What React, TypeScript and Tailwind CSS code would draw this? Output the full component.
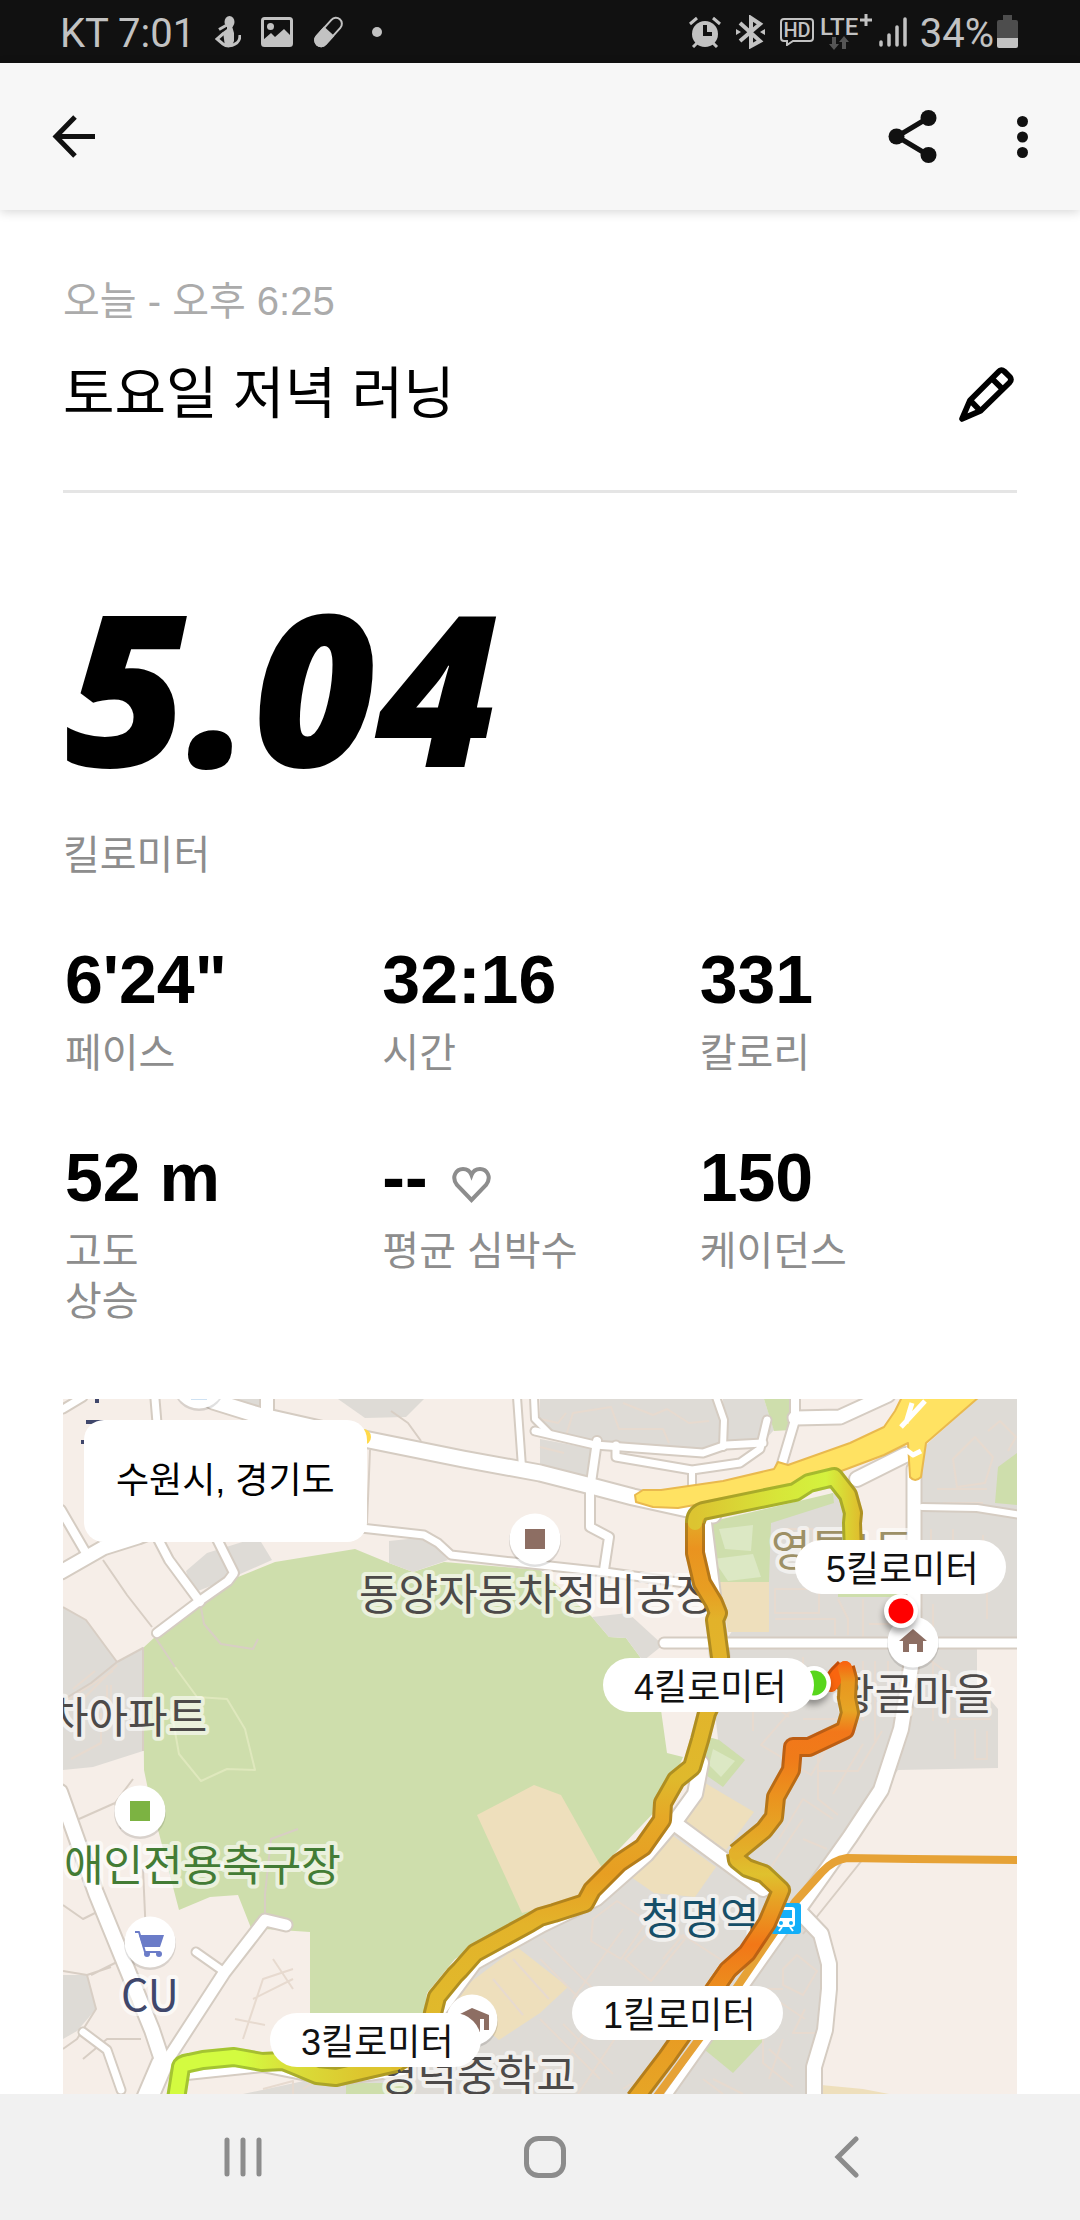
import type { ReactNode } from "react";

const stats = [
  { value: "6'24\"", label: "페이스" },
  { value: "32:16", label: "시간" },
  { value: "331", label: "칼로리" },
  { value: "52 m", label: "고도\n상승" },
  { value: "--", label: "평균 심박수", heart: true },
  { value: "150", label: "케이던스" },
];

const areas = [
  // built-up blocks
  { fill: "#dedbd6", points: "0,208 23,221 54,263 80,249 80,352 30,368 0,371" },
  { fill: "#dedbd6", points: "123,172 144,154 195,138 209,161 175,176 130,194" },
  { fill: "#dedbd6", points: "275,0 361,0 343,18 302,19" },
  { fill: "#dedbd6", points: "205,0 150,0 170,6 200,14" },
  { fill: "#dedbd6", points: "477,0 653,0 661,46 640,54 532,44 477,34" },
  { fill: "#dedbd6", points: "660,0 701,0 711,31 701,42 661,42" },
  { fill: "#dedbd6", points: "477,40 530,50 526,78 477,66" },
  { fill: "#dedbd6", points: "863,46 914,0 954,0 954,240 856,240 856,90" },
  { fill: "#dedbd6", points: "706,118 770,94 784,100 842,122 842,238 665,238 706,180" },
  { fill: "#dedbd6", points: "645,250 914,250 914,285 935,310 935,369 835,371 740,511 760,545 760,640 748,695 180,695 250,680 330,650 400,580 520,510 600,430 655,340" },
  { fill: "#dedbd6", points: "0,576 24,576 33,610 14,632 0,640" },
  { fill: "#f6eee8", points: "786,100 850,60 845,160 788,160" },
  // parks and hills
  { fill: "#cedeac", points: "80,249 92,238 175,178 212,163 292,150 326,164 350,173 381,163 477,171 529,218 546,238 563,239 577,258 598,311 604,354 620,358 600,404 539,468 477,508 392,560 364,594 361,614 247,614 247,533 188,529 175,496 147,498 116,511 87,400 81,371" },
  { fill: "#cedeac", points: "701,0 728,0 728,31 711,32" },
  { fill: "#cedeac", points: "642,124 770,94 771,104 708,124 706,183 649,183" },
  { fill: "#cedeac", points: "775,193 842,193 842,198 775,198" },
  { fill: "#cedeac", points: "935,68 954,54 954,106 932,104" },
  { fill: "#cedeac", points: "646,338 656,341 682,361 660,388 640,374" },
  { fill: "#cedeac", points: "642,651 670,674 701,641 690,600 660,600" },
  { fill: "#cedeac", points: "283,684 350,684 350,695 283,695" },
  { fill: "#dce8c4", points: "656,130 690,126 688,152 662,150" },
  { fill: "#dce8c4", points: "650,160 690,155 698,178 665,182" },
  { fill: "#dce8c4", points: "650,350 672,362 658,378 646,366" },
  // school grounds
  { fill: "#dedbd6", points: "326,142 364,138 385,161 350,173 326,164" },
  { fill: "#dedbd6", points: "529,218 565,214 600,246 580,262 563,239 546,238" },
  { fill: "#eedfbc", points: "414,416 471,386 498,396 539,469 511,501 459,514" },
  { fill: "#eedfbc", points: "656,183 706,183 706,233 665,233" },
  { fill: "#eedfbc", points: "642,384 691,413 663,451 622,423" },
  { fill: "#eedfbc", points: "606,434 653,468 632,498 591,494 568,478" },
  { fill: "#eedfbc", points: "385,600 454,548 505,588 477,614 436,641" },
  { fill: "#eedfbc", points: "758,686 800,690 826,695 758,695" },
];

const outlines = [
  "M502 40 510 14 548 8 556 30 600 30 606 44M560 4l30 12 14-6 22 14 20-2M477 20l18 4 8-10",
  "M477 48l24 6M890 60l22-22 18 20-8 26-28 4zM925 32l12-10 16 16-8 14M874 90h50M880 104h40M868 130v60M890 130v30h30v-24M884 190h40v30M870 205v24",
  "M712 190h44v24h-44zM712 220h60v16M770 130v50M720 130h30v20M775 200l10 20v16M800 200v38M806 225h32",
  "M665 262h60v20M690 262v70M740 320h40M740 270v-12M800 262v60M812 262v80M825 262v50M870 262v60M888 320h40M892 330v30M912 330v30h12v-28",
  "M738 300l-40 46 50 30 30-50M755 350v50l20 16M755 372h40l24-40M770 420l-30-20-24 40M800 345l-30 50M740 440l24 10M700 480l40-60",
  "M530 520l24-18 30 20-26 38-30-18zM562 560l34-38 26 18-34 42zM600 560l20-24 40 26M480 540l60 60M510 600l50-70M477 560l80 80M540 640l30-50",
  "M720 570l14-14 20 16-14 24-20-10zM712 600l30 20M720 590h-16l-16 40M742 610l-12 24h30M706 650l22 20M700 640v24l30 24M720 640l-14 40M650 680l30 15",
  "M477 620l60 60M490 680l40-60M515 695l40-60M500 625l50 50M530 610l30 24M470 660l40 30",
  "M180 640l20-60 30-10M190 600l40-20M210 560l20 30M172 620l30 6",
  "M10 290l22-18M0 304l50-32M20 300l34-34M44 300v-14M48 286v26M8 360l30-16v-30",
  "M640 680l20 15M560 690l16-10M200 690l30-8v13M240 690l20-14",
  "M450 560l36 40M430 580l30 36M865 260l20 14v50M700 262l-14 26 40 30",
];

const minorRoads = [
  "M40 161 64 196 89 228",
  "M0 208 23 221 54 263",
  "M54 263 28 284 0 301",
  "M54 263 80 249 80 352",
  "M16 420 52 404M58 430 52 404 70 380",
  "M84 560 80 470",
  "M0 506 20 520 36 512M28 576 60 560M0 572 24 576 48 568",
  "M24 576 33 610 14 640 0 650M78 640 44 640 20 660",
  "M307 51 304 124M328 12 345 24 358 42",
  "M137 203 141 225 158 245 190 250 195 240",
  "M92 238 112 268",
  "M202 521V495L208 440 235 430",
  "M740 535 800 460M858 80V240",
];

const roads = [
  { w: 15, d: "M150 2 195 16 306 41 400 60 477 74 532 88 570 98 629 111 650 116" },
  { w: 12, d: "M204-4V18" },
  { w: 7, d: "M92 0 94 24M0 10 20-2" },
  { w: 13, d: "M-2 173 40 149 75 138 120 120" },
  { w: 8, d: "M-2 111 23 154" },
  { w: 8, d: "M94 138 106 161 137 203" },
  { w: 8, d: "M153 138 171 174 165 182 135 203 94 234" },
  { w: 7, d: "M298 129 361 136 375 144 388 156 450 163 542 173 622 184" },
  { w: 6, d: "M454-2 459 68M471-2 472 20 486 34" },
  { w: 6, d: "M653-2 661 21 660 48" },
  { w: 7, d: "M472 32 532 46 640 54 663 46 700 44" },
  { w: 8, d: "M534 42 527 91 527 128 546 138 541 171" },
  { w: 7, d: "M553 46 553 58 629 71 677 64 697 50 704 21" },
  { w: 6, d: "M629 71V94" },
  { w: 8, d: "M732-2V21L718 68" },
  { w: 13, d: "M732 19 777 18 825-4" },
  { w: 13, d: "M851 70V224" },
  { w: 14, d: "M849 262 838 330 818 391 787 438 735 511" },
  { w: 14, d: "M735 511 758 535 766 565V590L762 631 751 668V700" },
  { w: 9, d: "M601 244H954" },
  { w: 6, d: "M859 108 914 109 958 116" },
  { w: 14, d: "M794 80 842 56" },
  { w: 12, d: "M642 124 652 204 660 260" },
  { w: 14, d: "M638 364 632 395 611 424 700 490" },
  { w: 12, d: "M611 424 584 456 534 500 480 526 412 564 378 610" },
  { w: 14, d: "M-3 393 33 494 89 631 99 661" },
  { w: 11, d: "M96 674 161 574 202 521 223 526" },
  { w: 7, d: "M133 553 160 572" },
  { w: 7, d: "M20 633 44 651 58 691" },
  { w: 20, d: "M99 665 84 700" },
  { w: 8, d: "M124 676 200 668 270 682 340 672" },
  { w: 7, d: "M740 505 670 604 602 700" },
];

const rail = "M956 461 850 460 784 459Q770 461 759 473L732 503 670 594 592 700";

const highway =
  "M572 96 580 91 598 91 660 82 711 70 715 63 725 66 787 44 821 28 832 12 839-2 916-2 863 44 858 78Q852 84 847 78L845 44 821 56 773 74 697 94 615 109 590 108 573 103Z";

const route = [
  { stroke: "url(#south)", d: "M113 700 118 668Q119 665 126 664L140 661 171 658 199 663 220 662 230 666 254 676 273 678 333 664" },
  { stroke: "url(#hill)", d: "M333 664 364 645 370 614 374 598 392 576 397 571 412 554 467 524 477 518 491 514 522 504 529 491 540 480 556 464 580 448 599 421 600 404 613 381 629 368 637 341 644 314 658 284" },
  { stroke: "url(#west)", d: "M658 284 657 258 652 221 655 214 651 204 639 184 632 154 632 124 635 116" },
  { stroke: "url(#north)", d: "M632 124Q632 115 640 112L732 93 746 84 771 78 785 96 790 114 789 124 790 155" },
  { stroke: "#f9650f", d: "M768 286 775 276 782 269" },
  { stroke: "url(#finish)", d: "M665 571 649 594 604 658 572 700" },
  { stroke: "url(#station)", d: "M673 454 674 461 684 469 701 475 718 491 704 524 684 554 665 571 649 594" },
  { stroke: "url(#village)", d: "M782 269 785 280 784 299 787 314 782 331 746 348 730 348 728 371 713 398 711 418 701 431 673 454" },
];

const placeLabels = [
  { x: 296, y: 211, text: "동양자동차정비공장", fill: "#4d4a49" },
  { x: -14, y: 334, text: "차아파트", fill: "#4d4a49" },
  { x: 1, y: 482, text: "애인전용축구장", fill: "#437c35" },
  { x: 58, y: 612, text: "CU", fill: "#40476b" },
  { x: 578, y: 535, text: "청명역", fill: "#174f68" },
  { x: 315, y: 692, text: "영덕중학교", fill: "#4d4a49" },
  { x: 708, y: 167, text: "영통1동", fill: "#9d9066" },
  { x: 772, y: 311, text: "황골마을", fill: "#4d4a49" },
];

const kilometers = [
  { x: 732, y: 141, text: "5킬로미터" },
  { x: 540, y: 259, text: "4킬로미터" },
  { x: 207, y: 614, text: "3킬로미터" },
  { x: 509, y: 587, text: "1킬로미터" },
];

function StatusBar() {
  return (
    <div className="flex h-[63px] items-center justify-between bg-[#111] pr-[62px] pl-[60px] font-[Roboto,sans-serif] text-[40px] leading-[40px] text-[#c2c2c2]">
      <div className="flex items-center gap-5">
        <span className="pt-1">KT 7:01</span>
        <svg className="h-8 w-[26px]" viewBox="0 0 26 32" fill="none" stroke="currentColor">
          <ellipse cx="14.5" cy="6" rx="5" ry="6" fill="currentColor" stroke="none" />
          <path d="M11 9.500 4 13.500" strokeWidth="3" />
          <path d="M12 10h5l2 7v8l-2 5-7 1-1-8-1-7 4-3z" fill="currentColor" stroke="none" />
          <path d="M9 17 2 23l6 5c4 3 9 2 12 0 3-1 5-5 5-9" strokeWidth="3" />
        </svg>
        <svg className="h-8 w-8" viewBox="0 0 32 32">
          <rect x="1.500" y="2.500" width="29" height="27" rx="2" fill="none" stroke="currentColor" strokeWidth="3" />
          <circle cx="9.500" cy="10.500" r="3.500" fill="currentColor" />
          <path d="M2 24 10 17l4 4 9-8 8 8v9H2z" fill="currentColor" />
        </svg>
        <svg className="h-8 w-[31px]" viewBox="0 0 31 32">
          <g transform="rotate(42 15.500 16)">
            <rect x="9.500" y="-1" width="12" height="34" rx="6" fill="none" stroke="currentColor" strokeWidth="2" />
            <path d="M8.500 15h14v12a7 7 0 0 1-14 0z" fill="currentColor" />
          </g>
        </svg>
        <span className="ml-2 size-2.5 rounded-full bg-[#c2c2c2]" />
      </div>

      <div className="flex items-center gap-[7px]">
        <svg className="mr-2 size-8" viewBox="0 0 32 32" fill="none" stroke="currentColor" strokeWidth="3">
          <circle cx="16" cy="18" r="13" fill="currentColor" stroke="none" />
          <path d="M1 8 8 2M31 8l-7-6M4 31l4-4M28 31l-4-4" />
          <path d="M16 9v9h7" stroke="#111" strokeWidth="4" />
        </svg>
        <svg className="mr-2 h-[34px] w-[29px]" viewBox="0 0 29 34" fill="none" stroke="currentColor" strokeWidth="4">
          <path d="M4 8 24 26 15 31V3l9 6L4 26" />
          <path d="M0 14l5 3-5 3zM29 14l-5 3 5 3z" fill="currentColor" stroke="none" />
        </svg>
        <svg className="h-7 w-[34px]" viewBox="0 0 34 28">
          <path d="M4 1h26q3 0 3 3v16q0 3-3 3H13l-6 4v-4H4q-3 0-3-3V4q0-3 3-3z" fill="none" stroke="currentColor" strokeWidth="2" />
          <text x="17" y="19" textAnchor="middle" fill="currentColor" className="text-[20px] font-medium">
            HD
          </text>
        </svg>
        <svg className="h-9 w-[51px]" viewBox="0 0 51 36">
          <text x="-1" y="21" fill="currentColor" className="text-[24px] font-medium">
            LTE
          </text>
          <path d="M39 6h12M45 0v12" stroke="currentColor" strokeWidth="3" />
          <path d="M11 23h4v7h3l-5 6-5-6h3zM21 35h4v-7h3l-5-6-5 6h3z" fill="#555" />
        </svg>
        <svg className="h-[30px] w-7" viewBox="0 0 28 30" stroke="currentColor" strokeWidth="3.500" strokeLinecap="round">
          <path d="M2 25v3M10 18v10M18 10v18M26 2v26" />
        </svg>
        <span className="-mr-1 ml-1.5 pt-1">34%</span>
        <svg className="h-[33px] w-[21px]" viewBox="0 0 21 33">
          <path d="M6 0h9v5h4q2 0 2 2v16H0V7q0-2 2-2h4z" fill="#4d4d4d" />
          <path d="M0 23h21v8q0 2-2 2H2q-2 0-2-2z" fill="currentColor" />
        </svg>
      </div>
    </div>
  );
}

function AppBar() {
  return (
    <header className="z-10 flex h-[147px] items-center justify-between bg-[#f7f7f7] px-[52px] text-[#111] shadow-[0_2px_10px_rgba(0,0,0,0.16)]">
      <button type="button" aria-label="뒤로">
        <svg className="size-[43px]" viewBox="0 0 43 43" fill="none" stroke="currentColor" strokeWidth="5">
          <path d="M43 21.500H4M23 2 4 21.500 23 41" />
        </svg>
      </button>
      <div className="flex items-center gap-20">
        <button type="button" aria-label="공유">
          <svg className="h-[53px] w-[49px]" viewBox="0 0 49 53" fill="currentColor">
            <path d="M40 8 9 26.500 40 45" fill="none" stroke="currentColor" strokeWidth="5" />
            <circle cx="40.500" cy="8" r="8" />
            <circle cx="8.500" cy="26.500" r="8" />
            <circle cx="40.500" cy="45" r="8" />
          </svg>
        </button>
        <button type="button" aria-label="더보기">
          <svg className="h-[42px] w-[11px]" viewBox="0 0 11 42" fill="currentColor">
            <circle cx="5.500" cy="5.500" r="5.500" />
            <circle cx="5.500" cy="21" r="5.500" />
            <circle cx="5.500" cy="36.500" r="5.500" />
          </svg>
        </button>
      </div>
    </header>
  );
}

function Poi({ x, y, children }: { x: number; y: number; children: ReactNode }) {
  return (
    <g transform={`translate(${x} ${y})`}>
      <circle cy="2" r="26" fill="#000" opacity="0.12" />
      <circle r="25.500" fill="#fff" />
      {children}
    </g>
  );
}

function Marker({ x, y, color }: { x: number; y: number; color: string }) {
  return (
    <g transform={`translate(${x} ${y})`}>
      <circle cx="-1" cy="5" r="17" fill="#000" opacity="0.35" filter="url(#soft)" />
      <circle r="17" fill="#fff" />
      <circle r="12.500" fill={color} />
    </g>
  );
}

function RouteMap() {
  return (
    <div className="relative">
      <svg className="block w-full" viewBox="0 0 954 695" fill="none" strokeLinejoin="round">
        <defs>
          <filter id="soft" x="-50%" y="-50%" width="200%" height="200%">
            <feGaussianBlur stdDeviation="3" />
          </filter>
          <linearGradient id="south" gradientUnits="userSpaceOnUse" x1="180" y1="0" x2="300" y2="0">
            <stop offset="0" stopColor="#d3fb40" />
            <stop offset="0.350" stopColor="#d9e13a" />
            <stop offset="1" stopColor="#ddc52e" />
          </linearGradient>
          <linearGradient id="hill" gradientUnits="userSpaceOnUse" x1="0" y1="664" x2="0" y2="300">
            <stop offset="0" stopColor="#dfbd2c" />
            <stop offset="0.380" stopColor="#e3b32a" />
            <stop offset="0.520" stopColor="#e79e22" />
            <stop offset="0.680" stopColor="#e5a927" />
            <stop offset="0.780" stopColor="#dfb92c" />
            <stop offset="1" stopColor="#e2b42b" />
          </linearGradient>
          <linearGradient id="west" gradientUnits="userSpaceOnUse" x1="0" y1="284" x2="0" y2="116">
            <stop offset="0" stopColor="#e2b42b" />
            <stop offset="0.380" stopColor="#e2b22a" />
            <stop offset="0.550" stopColor="#e79e22" />
            <stop offset="0.800" stopColor="#ea931f" />
            <stop offset="1" stopColor="#e2b02a" />
          </linearGradient>
          <linearGradient id="north" gradientUnits="userSpaceOnUse" x1="632" y1="140" x2="800" y2="140">
            <stop offset="0" stopColor="#dcc431" />
            <stop offset="0.500" stopColor="#d7e639" />
            <stop offset="0.780" stopColor="#d4f23e" />
            <stop offset="0.930" stopColor="#dccb31" />
            <stop offset="1" stopColor="#e0b82c" />
          </linearGradient>
          <linearGradient id="village" gradientUnits="userSpaceOnUse" x1="0" y1="264" x2="0" y2="455">
            <stop offset="0" stopColor="#f9650f" />
            <stop offset="0.100" stopColor="#e8971f" />
            <stop offset="0.250" stopColor="#e6a525" />
            <stop offset="0.360" stopColor="#f2771a" />
            <stop offset="0.500" stopColor="#f07b19" />
            <stop offset="0.720" stopColor="#ea951f" />
            <stop offset="1" stopColor="#e2b12a" />
          </linearGradient>
          <linearGradient id="station" gradientUnits="userSpaceOnUse" x1="0" y1="454" x2="0" y2="595">
            <stop offset="0" stopColor="#e2b12a" />
            <stop offset="0.150" stopColor="#dfc12e" />
            <stop offset="0.350" stopColor="#e7a024" />
            <stop offset="0.650" stopColor="#f27717" />
            <stop offset="1" stopColor="#ea911f" />
          </linearGradient>
          <linearGradient id="finish" gradientUnits="userSpaceOnUse" x1="0" y1="570" x2="0" y2="695">
            <stop offset="0" stopColor="#ea911f" />
            <stop offset="1" stopColor="#e6a526" />
          </linearGradient>
        </defs>

        <rect width="954" height="695" fill="#f6eee8" />
        {areas.map((area) => (
          <polygon key={area.points} {...area} />
        ))}
        {outlines.map((d) => (
          <path key={d} d={d} stroke="#e7dacf" strokeWidth="2" />
        ))}
        <path d="M112 268 134 298 164 300 182 330 192 371 164 370 138 382 116 355 108 310" stroke="#dfe8bd" strokeWidth="2" />
        {minorRoads.map((d) => (
          <path key={d} d={d} stroke="#d8cec4" strokeWidth="2" />
        ))}
        {roads.map(({ d, w }) => (
          <path key={d} d={d} stroke="#d5ccc2" strokeWidth={w + 4} strokeLinecap="round" />
        ))}
        {roads.map(({ d, w }) => (
          <path key={d} d={d} stroke="#fff" strokeWidth={w} strokeLinecap="round" />
        ))}
        <path d={highway} fill="#ffe262" stroke="#e9b94e" strokeWidth="2" />
        <path d="M838 28 862 2M843 24 849 4M842 50l8 6 8-4" stroke="#fff" strokeWidth="5" />
        <circle cx="300" cy="38" r="8" fill="#ffd94a" />
        <path d={rail} stroke="#e6a236" strokeWidth="8" />

        <Poi x={472} y={140}>
          <rect x="-10" y="-10" width="20" height="20" fill="#8d6e63" />
        </Poi>
        <Poi x={77} y={412}>
          <rect x="-10" y="-10" width="20" height="20" fill="#7cb342" />
        </Poi>
        <Poi x={87} y={543}>
          <path d="M-15-10h4l6 20H10" stroke="#6b7cc8" strokeWidth="2" />
          <path d="M-11-7H14L10 5H-7z" fill="#6b7cc8" />
          <circle cx="-3" cy="12" r="3" fill="#6b7cc8" />
          <circle cx="9" cy="12" r="3" fill="#6b7cc8" />
        </Poi>
        <Poi x={850} y={243}>
          <path d="M0-13 14-1H10V10H4V2H-4V10H-10V-1H-14z" fill="#8d6e63" />
        </Poi>
        <Poi x={409} y={621}>
          <path d="M-14-5 0-12 17-5V10H12V-1H8V12H-9V-2z" fill="#8d6e63" />
        </Poi>
        <Poi x={136} y={-16}>
          <rect x="-8" y="10" width="16" height="7" fill="#cfe2f3" />
        </Poi>
        <path d="M34 0V4M23 23H50M18 43H26" stroke="#40476b" strokeWidth="4" />

        <g className="font-['Noto_Sans_CJK_KR',sans-serif] text-[43px]">
          {placeLabels.map(({ text, ...rest }) => (
            <text key={text} {...rest} stroke="#fff" strokeOpacity="0.600" strokeWidth="8" paintOrder="stroke">
              {text}
            </text>
          ))}
        </g>

        <g>
          <rect x="708" y="504" width="30" height="31" rx="3" fill="#13aff8" />
          <rect x="714" y="508" width="18" height="20" rx="3" fill="#fff" />
          <rect x="717" y="511" width="12" height="8" fill="#13aff8" />
          <path d="M716 532l3-4M730 532l-3-4" stroke="#fff" strokeWidth="2" />
          <circle cx="718" cy="524" r="2" fill="#13aff8" />
          <circle cx="728" cy="524" r="2" fill="#13aff8" />
        </g>

        {/* dark edge first, then the pace colour on top */}
        {route.map(({ d, stroke }) => (
          <path key={d} d={d} stroke={stroke} strokeWidth="20" />
        ))}
        <path d={route.map(({ d }) => d).join("")} stroke="#000" strokeOpacity="0.220" strokeWidth="20" />
        {route.map(({ d, stroke }) => (
          <path key={d} d={d} stroke={stroke} strokeWidth="14" strokeLinecap="round" />
        ))}

        <Marker x={838} y={212} color="#ff0000" />
        <Marker x={751} y={284} color="#58d61d" />

        {kilometers.map(({ x, y, text }) => (
          <g key={text}>
            <rect x={x} y={y} width="211" height="54" rx="27" fill="#fff" />
            <text
              x={x + 31}
              y={y + 42}
              fill="#111"
              className="font-['Liberation_Sans','Noto_Sans_CJK_KR',sans-serif] text-[36px]"
            >
              {text}
            </text>
          </g>
        ))}
      </svg>

      <div className="absolute top-[21px] left-[21px] rounded-[20px] bg-white px-8 py-9 text-[36px] leading-[50px]">
        수원시, 경기도
      </div>
    </div>
  );
}

function NavigationBar() {
  return (
    <nav className="grid h-[126px] grid-cols-3 items-center justify-items-center bg-[#f1f1f1] pr-[82px] pl-[92px] text-[#8c8c8c]">
      <button type="button" aria-label="최근 앱">
        <svg className="size-[42px]" viewBox="0 0 42 42" stroke="currentColor" strokeWidth="5" strokeLinecap="round">
          <path d="M5 4v34M21 4v34M37 4v34" />
        </svg>
      </button>
      <button type="button" aria-label="홈">
        <svg className="size-[42px]" viewBox="0 0 42 42" fill="none" stroke="currentColor" strokeWidth="5">
          <rect x="2.500" y="2.500" width="37" height="37" rx="12" />
        </svg>
      </button>
      <button type="button" aria-label="이전">
        <svg className="size-[42px]" viewBox="0 0 42 42" fill="none" stroke="currentColor" strokeWidth="5" strokeLinecap="round">
          <path d="M30 3 12 21 30 39" />
        </svg>
      </button>
    </nav>
  );
}

export default function App() {
  return (
    <div className="flex min-h-screen flex-col bg-white font-['Liberation_Sans','Noto_Sans_CJK_KR',sans-serif] text-black">
      <StatusBar />
      <AppBar />

      <main className="flex-1 px-[63px] pt-[66px]">
        <p className="text-[40px] leading-[50px] text-[#ababab]">오늘 - 오후 6:25</p>
        <div className="mt-8 flex items-center justify-between border-b-[3px] border-[#e5e5e5] pr-[3px] pb-[60px]">
          <h1 className="text-[56px] leading-[72px]">토요일 저녁 러닝</h1>
          <button type="button" aria-label="이름 수정">
            <svg className="size-[55px]" viewBox="0 0 164 164" fill="none" stroke="currentColor" strokeWidth="17" strokeLinejoin="round">
              <path d="M9 155 33 99 118 14Q126 5 135 13L152 30Q158 38 151 46L64 131Z" />
              <path d="M33 99 64 131M98 34 130 66" />
            </svg>
          </button>
        </div>

        <p className="mt-[112px] pl-0.5 font-['Open_Sans',sans-serif] text-[212px] leading-[160px] font-extrabold italic">
          5.04
        </p>
        <p className="mt-[65px] text-[40px] leading-[50px] text-[#8d8d8d]">킬로미터</p>

        <dl className="mt-[65px] mb-[73px] grid grid-cols-3 gap-y-[65px] pl-0.5">
          {stats.map(({ value, label, heart }) => (
            <div key={label} className="flex flex-col-reverse justify-end gap-[15px]">
              <dt className="text-[40px] leading-[50px] whitespace-pre-line text-[#8d8d8d]">{label}</dt>
              <dd className="flex items-center gap-6 text-[68px] leading-[68px] font-bold">
                {value}
                {heart && (
                  <svg className="mt-4 h-9 w-[39px]" viewBox="0 0 39 36" fill="none" stroke="#8d8d8d" strokeWidth="4">
                    <path d="M19.500 33 5 18C-1 10 4 2 11 2c4 0 7 2 8.500 6C21 4 24 2 28 2c7 0 12 8 6 16z" />
                  </svg>
                )}
              </dd>
            </div>
          ))}
        </dl>

        <RouteMap />
      </main>

      <NavigationBar />
    </div>
  );
}
